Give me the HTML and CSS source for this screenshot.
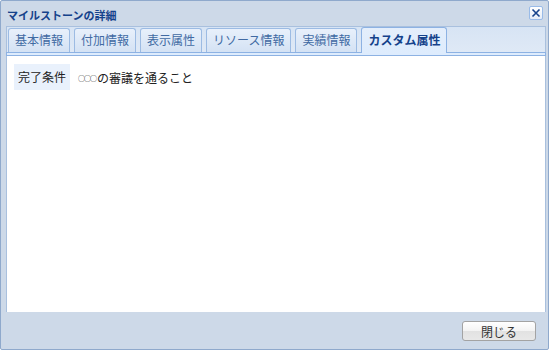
FILE: index.html
```html
<!DOCTYPE html>
<html lang="ja">
<head>
    <meta charset="UTF-8">
    <title>マイルストーンの詳細</title>
    <link rel="stylesheet" href="styles.css">
</head>
<body>
    <div class="window">
        <div class="window-header">
            <span class="window-title">マイルストーンの詳細</span>
            <button class="close-btn" title="閉じる">
                <svg width="10" height="10" viewBox="0 0 10 10">
                    <path d="M1.5 1.5 L8.5 8.5 M8.5 1.5 L1.5 8.5" stroke="#15428b" stroke-width="1.6" fill="none"/>
                </svg>
            </button>
        </div>

        <div class="tab-panel">
            <div class="tab-strip">
                <div class="tab">基本情報</div>
                <div class="tab">付加情報</div>
                <div class="tab">表示属性</div>
                <div class="tab">リソース情報</div>
                <div class="tab">実績情報</div>
                <div class="tab active">カスタム属性</div>
            </div>
            <div class="tab-spacer"></div>
            <div class="tab-body">
                <div class="field-row">
                    <div class="field-label">完了条件</div>
                    <div class="field-value"><span class="marks">○○○</span>の審議を通ること</div>
                </div>
            </div>
        </div>

        <div class="window-footer">
            <button class="footer-btn">閉じる</button>
        </div>
    </div>
</body>
</html>
```

FILE: styles.css
```css
* {
    margin: 0;
    padding: 0;
    box-sizing: border-box;
}

body {
    font-family: "Noto Sans CJK JP", "Liberation Sans", sans-serif;
    font-size: 12px;
    background: #ffffff;
    width: 551px;
    height: 352px;
    overflow: hidden;
}

.window {
    width: 549px;
    height: 350px;
    background: #cdd9e8;
    border: 1px solid #8fa9cc;
    border-radius: 2px;
    display: flex;
    flex-direction: column;
}

.window-header {
    height: 25px;
    display: flex;
    align-items: center;
    justify-content: space-between;
    padding: 0 5px 0 6px;
}

.window-title {
    font-size: 11px;
    font-weight: bold;
    color: #15428b;
    line-height: 14px;
    margin-top: 2px;
}

.close-btn {
    width: 14px;
    height: 14px;
    margin-top: -2px;
    border: 1px solid #99bbe8;
    border-radius: 2px;
    background: linear-gradient(#ffffff, #e4ecf7);
    display: flex;
    align-items: center;
    justify-content: center;
    cursor: pointer;
}

.tab-panel {
    margin: 0 2px 0 5px;
    display: flex;
    flex-direction: column;
}

.tab-strip {
    height: 26px;
    display: flex;
    align-items: flex-end;
    gap: 4px;
    padding-left: 1px;
    background: linear-gradient(#d7e4f4, #dfe9f6);
    border: 1px solid #a9c0de;
    border-bottom: none;
}

.tab {
    height: 24px;
    padding: 0 6px;
    border: 1px solid #9cbbe3;
    border-bottom: none;
    border-radius: 3px 3px 0 0;
    background: linear-gradient(#e8f0fb, #d4e2f4);
    color: #416aa3;
    line-height: 22px;
    white-space: nowrap;
}

.tab.active {
    height: 26px;
    margin-bottom: -1px;
    border-color: #8db2e3;
    background: linear-gradient(#e4eefb, #deecfd);
    color: #15428b;
    font-weight: bold;
    line-height: 24px;
    position: relative;
}

.tab-spacer {
    height: 4px;
    border: 1px solid #8db2e3;
    background: #deecfd;
}

.tab-body {
    height: 256px;
    background: #ffffff;
    border-left: 1px solid #a9c0de;
    border-right: 1px solid #a9c0de;
    padding: 8px 7px;
}

.field-row {
    display: flex;
    align-items: center;
    gap: 8px;
}

.field-label {
    background: #e9f1fc;
    color: #222;
    height: 26px;
    line-height: 26px;
    padding: 0 4px;
}

.field-value {
    color: #222;
}

.marks {
    font-size: 7px;
    letter-spacing: -1px;
    margin-right: 1px;
    vertical-align: 2px;
}

.window-footer {
    flex: 1;
    display: flex;
    justify-content: flex-end;
    align-items: flex-start;
    padding: 9px 12px 0 0;
}

.footer-btn {
    width: 74px;
    height: 20px;
    border: 1px solid #a3a3a3;
    border-radius: 3px;
    background: linear-gradient(#ffffff 0%, #f3f3f3 50%, #e2e2e2 51%, #e8e8e8 100%);
    font-family: "Noto Sans CJK JP", sans-serif;
    font-size: 12px;
    color: #333;
    cursor: pointer;
}
```
